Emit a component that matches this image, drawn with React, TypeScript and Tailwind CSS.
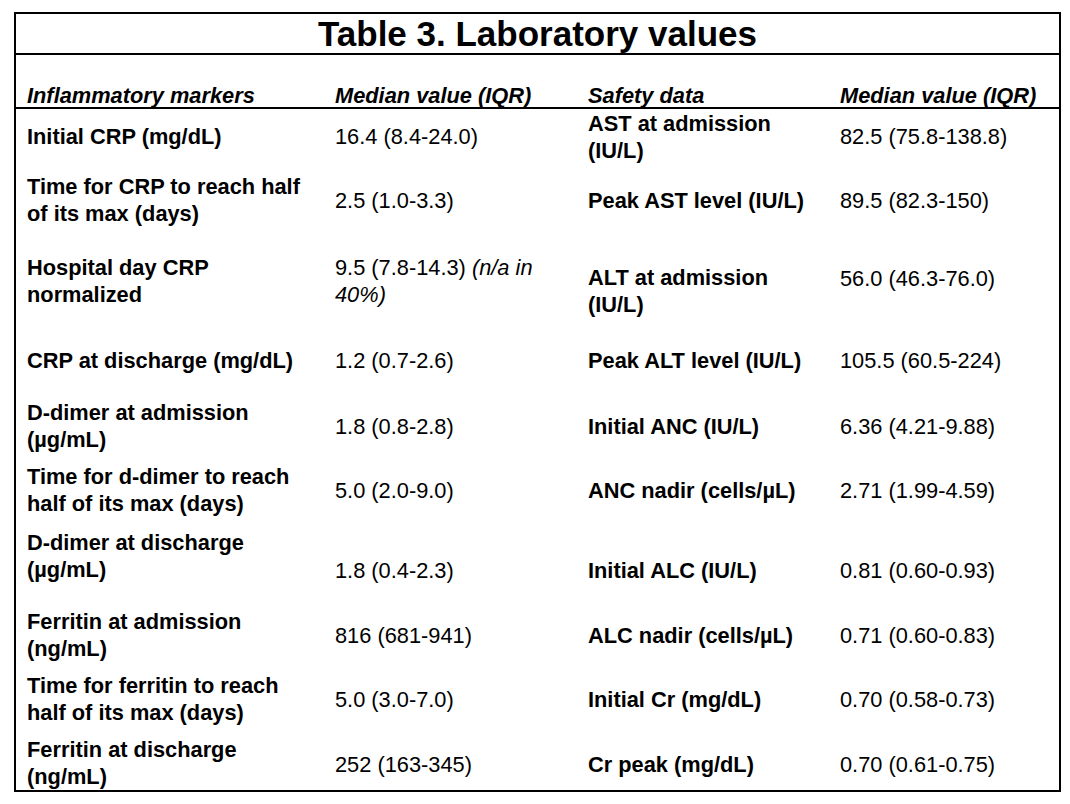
import type { ReactNode } from 'react';

interface Cell {
  text: ReactNode;
  bold?: boolean;
  place: string;
}

interface Row {
  height: string;
  cells: Cell[];
}

const center = 'self-center';

const rows: Row[] = [
  {
    height: 'h-[55px]',
    cells: [
      { text: 'Initial CRP (mg/dL)', bold: true, place: center },
      { text: '16.4 (8.4-24.0)', place: center },
      { text: <>AST at admission<br />(IU/L)</>, bold: true, place: center },
      { text: '82.5 (75.8-138.8)', place: center },
    ],
  },
  {
    height: 'h-[72px]',
    cells: [
      { text: <>Time for CRP to reach half<br />of its max (days)</>, bold: true, place: center },
      { text: '2.5 (1.0-3.3)', place: center },
      { text: 'Peak AST level (IU/L)', bold: true, place: center },
      { text: '89.5 (82.3-150)', place: center },
    ],
  },
  {
    height: 'h-[90px]',
    cells: [
      { text: <>Hospital day CRP<br />normalized</>, bold: true, place: 'self-start pt-[18px]' },
      {
        text: <>9.5 (7.8-14.3) <i>(n/a in</i><br /><i>40%)</i></>,
        place: 'self-start pt-[18px]',
      },
      { text: <>ALT at admission<br />(IU/L)</>, bold: true, place: 'self-start pt-[28px]' },
      { text: '56.0 (46.3-76.0)', place: 'self-start pt-[29px]' },
    ],
  },
  {
    height: 'h-[68px]',
    cells: [
      { text: 'CRP at discharge (mg/dL)', bold: true, place: center },
      { text: '1.2 (0.7-2.6)', place: center },
      { text: 'Peak ALT level (IU/L)', bold: true, place: center },
      { text: '105.5 (60.5-224)', place: center },
    ],
  },
  {
    height: 'h-[64px]',
    cells: [
      { text: <>D-dimer at admission<br />(µg/mL)</>, bold: true, place: center },
      { text: '1.8 (0.8-2.8)', place: center },
      { text: 'Initial ANC (IU/L)', bold: true, place: center },
      { text: '6.36 (4.21-9.88)', place: center },
    ],
  },
  {
    height: 'h-[64px]',
    cells: [
      { text: <>Time for d-dimer to reach<br />half of its max (days)</>, bold: true, place: center },
      { text: '5.0 (2.0-9.0)', place: center },
      { text: 'ANC nadir (cells/µL)', bold: true, place: center },
      { text: '2.71 (1.99-4.59)', place: center },
    ],
  },
  {
    height: 'h-[80px]',
    cells: [
      { text: <>D-dimer at discharge<br />(µg/mL)</>, bold: true, place: 'self-start pt-[7px]' },
      { text: '1.8 (0.4-2.3)', place: 'self-start pt-[35px]' },
      { text: 'Initial ALC (IU/L)', bold: true, place: 'self-start pt-[35px]' },
      { text: '0.81 (0.60-0.93)', place: 'self-start pt-[35px]' },
    ],
  },
  {
    height: 'h-[66px]',
    cells: [
      { text: <>Ferritin at admission<br />(ng/mL)</>, bold: true, place: center },
      { text: '816 (681-941)', place: center },
      { text: 'ALC nadir (cells/µL)', bold: true, place: center },
      { text: '0.71 (0.60-0.83)', place: center },
    ],
  },
  {
    height: 'h-[62px]',
    cells: [
      { text: <>Time for ferritin to reach<br />half of its max (days)</>, bold: true, place: center },
      { text: '5.0 (3.0-7.0)', place: center },
      { text: 'Initial Cr (mg/dL)', bold: true, place: center },
      { text: '0.70 (0.58-0.73)', place: center },
    ],
  },
  {
    height: 'h-[60px]',
    cells: [
      { text: <>Ferritin at discharge<br />(ng/mL)</>, bold: true, place: 'self-start pt-[6px]' },
      { text: '252 (163-345)', place: 'self-start pt-[21px]' },
      { text: 'Cr peak (mg/dL)', bold: true, place: 'self-start pt-[21px]' },
      { text: '0.70 (0.61-0.75)', place: 'self-start pt-[21px]' },
    ],
  },
];

const cols = 'grid grid-cols-[308px_253px_252px_1fr] px-[11px]';

export default function App() {
  return (
    <div className="min-h-screen bg-white pt-[12px] pl-[14px] text-black font-['Liberation_Sans',Arial,sans-serif]">
      <div className="w-[1047px] border-2 border-black">
        {/* Title */}
        <div className="h-[41px] border-b-2 border-black text-center text-[35px] font-bold leading-[39px]">
          Table 3. Laboratory values
        </div>

        {/* Column headings */}
        <div className={`${cols} h-[54px] items-end border-b-2 border-black pb-[1px] text-[21.8px] font-bold italic leading-[20px]`}>
          <div>Inflammatory markers</div>
          <div>Median value (IQR)</div>
          <div>Safety data</div>
          <div>Median value (IQR)</div>
        </div>

        {/* Body */}
        {rows.map((row, i) => (
          <div key={i} className={`${cols} ${row.height} text-[21.8px] leading-[27px]`}>
            {row.cells.map((cell, j) => (
              <div key={j} className={`${cell.place} ${cell.bold ? 'font-bold' : ''} whitespace-nowrap`}>
                {cell.text}
              </div>
            ))}
          </div>
        ))}
      </div>
    </div>
  );
}
